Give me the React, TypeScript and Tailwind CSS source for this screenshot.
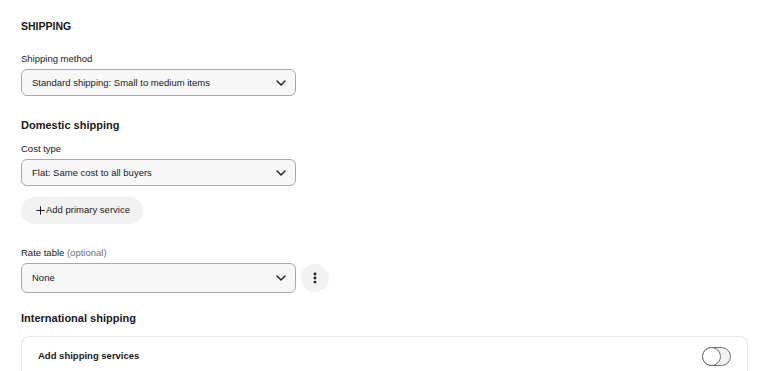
import { ChevronDown, Plus, EllipsisVertical } from 'lucide-react'

function SelectBox({ value, tall = false }: { value: string; tall?: boolean }) {
  return (
    <div
      className={`flex w-[275px] items-center justify-between rounded-[6px] border border-[#a9a9a9] bg-[#f7f7f7] pl-[10px] pr-[6px] ${
        tall ? 'h-[30px]' : 'h-[27px]'
      }`}
    >
      <span className="pt-px text-[9.5px] text-[#191919]">{value}</span>
      <ChevronDown size={16} strokeWidth={2} className="text-[#191919]" />
    </div>
  )
}

export default function App() {
  return (
    <div className="min-h-[371px] bg-white px-[21px] pt-[19px] font-['Liberation_Sans',Arial,sans-serif] text-[#191919]">
      <h2 className="text-[10.5px] font-bold leading-[14px]">SHIPPING</h2>

      <p className="mt-[19px] text-[9.5px] leading-[13px]">Shipping method</p>
      <div className="mt-[4px]">
        <SelectBox value="Standard shipping: Small to medium items" />
      </div>

      <h3 className="mt-[22px] text-[11px] font-bold leading-[15px]">Domestic shipping</h3>
      <p className="mt-[9px] text-[9.5px] leading-[13px]">Cost type</p>
      <div className="mt-[4px]">
        <SelectBox value="Flat: Same cost to all buyers" />
      </div>

      <button className="mt-[11px] flex h-[27px] items-center rounded-full bg-[#f2f2f2] pl-[13px] pr-[13px] text-[9.5px] text-[#191919]">
        <Plus size={13} strokeWidth={1.8} className="-mr-[1px]" />
        Add primary service
      </button>

      <p className="mt-[22px] text-[9.5px] leading-[13px]">
        Rate table <span className="text-[#707070]">(optional)</span>
      </p>
      <div className="mt-[4px] flex items-center gap-[5px]">
        <SelectBox value="None" tall />
        <button className="flex h-[28px] w-[28px] items-center justify-center rounded-full bg-[#f2f2f2]">
          <EllipsisVertical size={14} strokeWidth={3} className="text-[#191919]" />
        </button>
      </div>

      <h3 className="mt-[18px] text-[11px] font-bold leading-[15px]">International shipping</h3>

      <div className="mt-[10px] w-[727px] rounded-t-[8px] border border-b-0 border-[#e8e8e8] px-[16px] pt-[10px] pb-[10px]">
        <div className="flex items-center justify-between">
          <span className="text-[9.5px] font-bold">Add shipping services</span>
          <div className="relative h-[19px] w-[29px] rounded-full border border-[#707070] bg-[#f2f2f2]">
            <div className="absolute -left-px -top-px h-[19px] w-[19px] rounded-full border border-[#707070] bg-white" />
          </div>
        </div>
      </div>
    </div>
  )
}
